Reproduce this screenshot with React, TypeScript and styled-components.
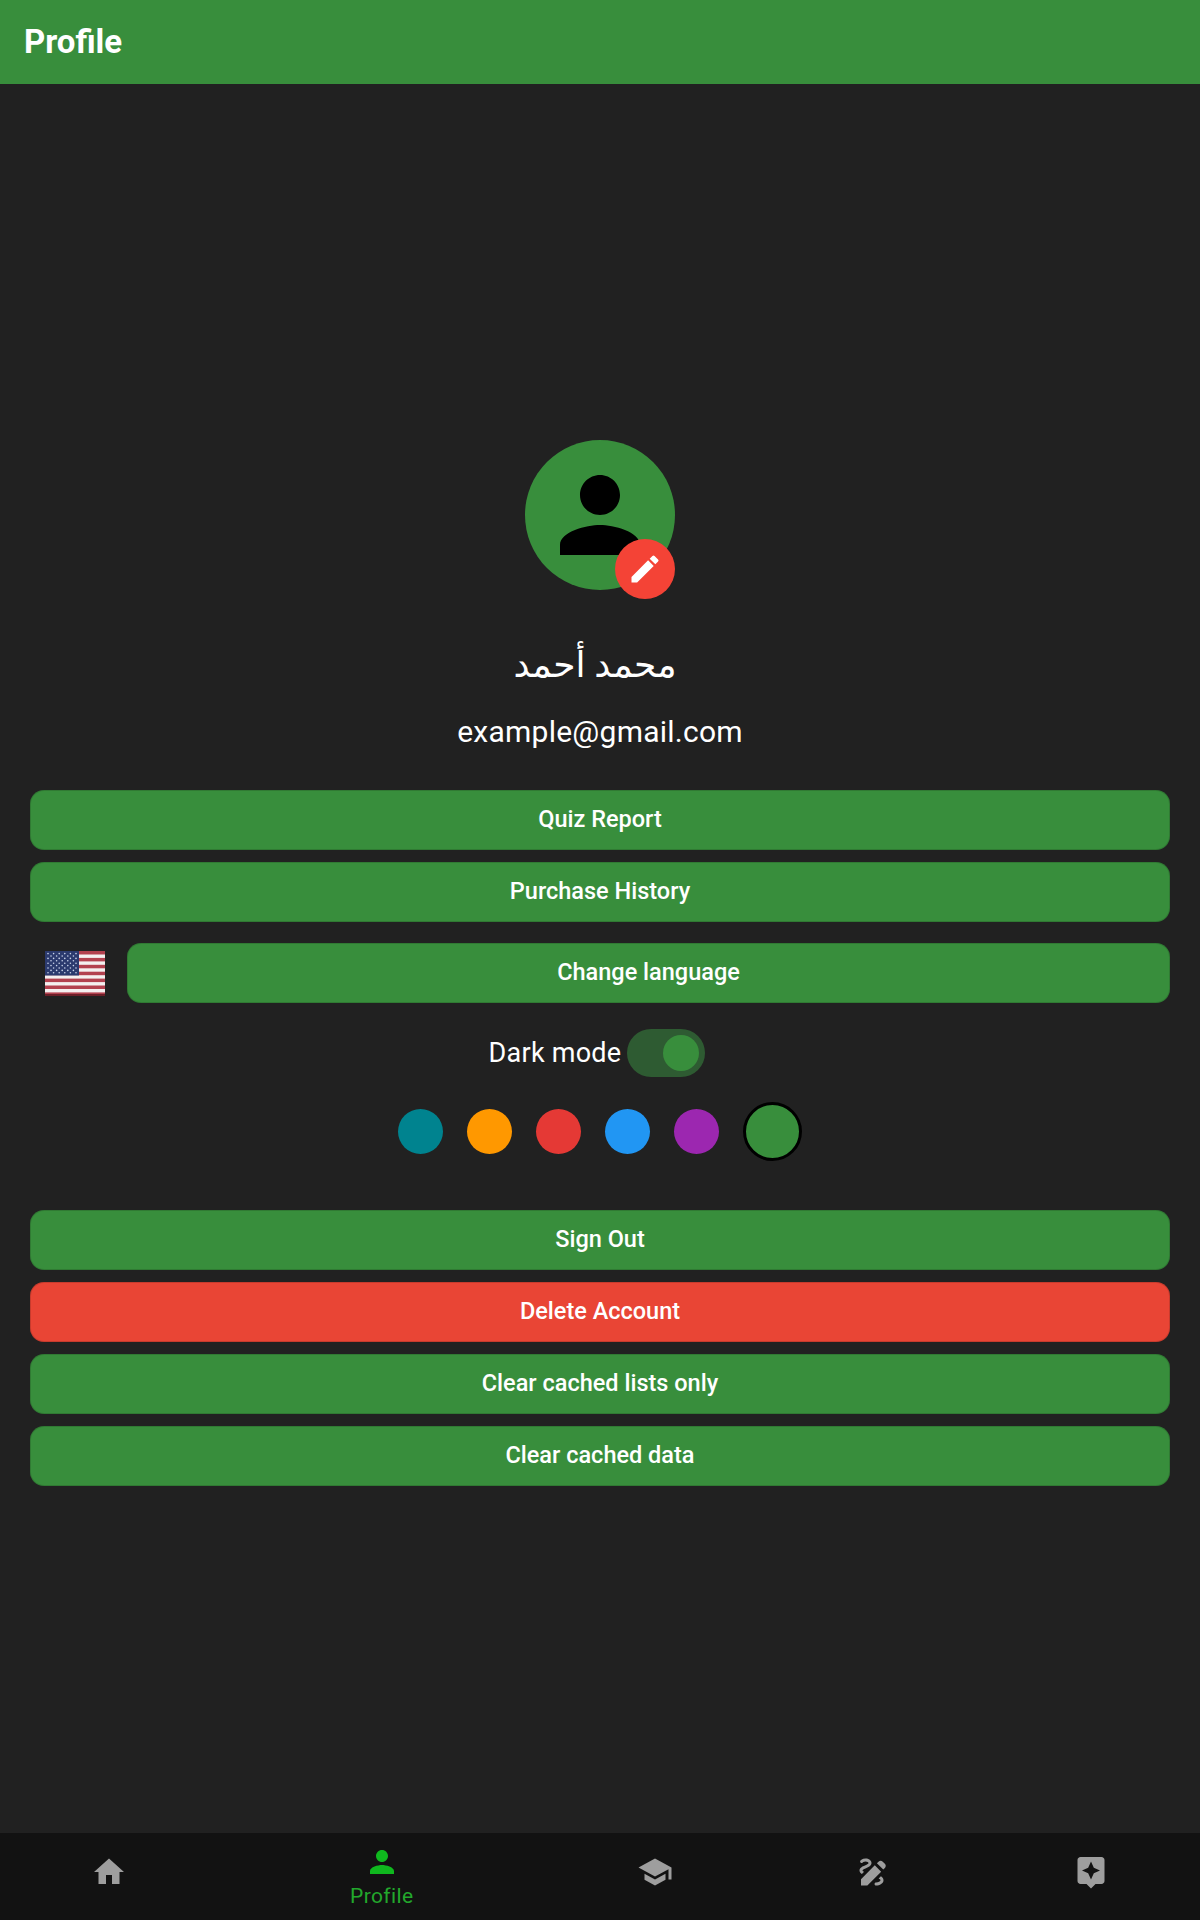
import { createGlobalStyle, styled } from 'styled-components';
import { MdAssistant, MdDraw, MdEdit, MdHome, MdPerson, MdSchool } from 'react-icons/md';

const GlobalStyle = createGlobalStyle`
  html, body {
    margin: 0;
    padding: 0;
    background: #212121;
  }
  * {
    box-sizing: border-box;
  }
`;

const Page = styled.div`
  display: flex;
  flex-direction: column;
  width: 1200px;
  height: 1920px;
  background: #212121;
  color: #fff;
  font-family: Roboto, "DejaVu Sans", sans-serif;
`;

const Header = styled.header`
  display: flex;
  align-items: center;
  height: 84px;
  padding: 0 24px 1px;
  background: #388e3c;
`;

const Title = styled.h1`
  margin: 0;
  font-size: 33px;
  font-weight: 700;
`;

const Main = styled.main`
  flex: 1;
  display: flex;
  flex-direction: column;
  padding: 356px 30px 0;
`;

const AvatarWrap = styled.div`
  position: relative;
  align-self: center;
  width: 150px;
  height: 150px;
`;

const Avatar = styled.div`
  display: flex;
  align-items: center;
  justify-content: center;
  width: 150px;
  height: 150px;
  border-radius: 50%;
  background: #388e3c;
  color: #000;
`;

const EditBadge = styled.div`
  position: absolute;
  right: 0;
  bottom: -9px;
  display: flex;
  align-items: center;
  justify-content: center;
  width: 60px;
  height: 60px;
  border-radius: 50%;
  background: #f44336;
  color: #fff;
`;

const Name = styled.div`
  margin-top: 50px;
  height: 50px;
  padding-right: 10px;
  line-height: 50px;
  text-align: center;
  font-size: 36px;
`;

const Email = styled.div`
  margin-top: 25px;
  height: 34px;
  line-height: 34px;
  text-align: center;
  font-size: 30px;
  letter-spacing: 0.25px;
`;

const ButtonStack = styled.div<{ $top: number }>`
  display: flex;
  flex-direction: column;
  gap: 12px;
  margin-top: ${(p) => p.$top}px;
`;

const ActionButton = styled.button<{ $danger?: boolean }>`
  flex: 1 1 auto;
  width: 100%;
  height: 60px;
  padding: 0 0 2px;
  border: 0;
  border-radius: 14px;
  background: ${(p) => (p.$danger ? '#e94535' : '#388e3c')};
  box-shadow: inset 0 0 0 1px rgba(0, 0, 0, 0.14);
  color: #fff;
  font-family: inherit;
  font-size: 23.5px;
  font-weight: 500;
`;

const LanguageRow = styled.div`
  display: flex;
  align-items: center;
  gap: 22px;
  margin-top: 21px;
  padding-left: 15px;
`;

const FlagSvg = styled.svg`
  flex: 0 0 60px;
`;

const ModeRow = styled.div`
  display: flex;
  align-items: center;
  justify-content: center;
  gap: 6px;
  margin-top: 26px;
  padding-right: 6px;
  font-size: 27px;
  letter-spacing: 0.25px;
`;

const Track = styled.div`
  display: flex;
  align-items: center;
  justify-content: flex-end;
  width: 78px;
  height: 48px;
  padding-right: 6px;
  border-radius: 24px;
  background: #2e5b32;
`;

const Thumb = styled.div`
  width: 36px;
  height: 36px;
  border-radius: 50%;
  background: #388e3c;
`;

const Swatches = styled.div`
  display: flex;
  align-items: center;
  justify-content: center;
  gap: 24px;
  margin-top: 25px;
`;

const Swatch = styled.div<{ $color: string; $selected?: boolean }>`
  width: ${(p) => (p.$selected ? 59 : 45)}px;
  height: ${(p) => (p.$selected ? 59 : 45)}px;
  border-radius: 50%;
  background: ${(p) => p.$color};
  border: ${(p) => (p.$selected ? '3px solid #000' : '0')};
`;

const BottomNav = styled.nav`
  display: grid;
  grid-template-columns: 1fr 1.5fr 1fr 1fr 1fr;
  height: 87px;
  background: #121212;
`;

const NavItem = styled.div<{ $active?: boolean }>`
  display: flex;
  flex-direction: column;
  align-items: center;
  justify-content: ${(p) => (p.$active ? 'flex-start' : 'center')};
  padding-top: ${(p) => (p.$active ? 11 : 0)}px;
  padding-bottom: ${(p) => (p.$active ? 0 : 10)}px;
  color: ${(p) => (p.$active ? '#0fb81e' : '#9e9e9e')};
`;

const NavLabel = styled.span`
  margin-top: 2px;
  font-size: 21px;
  line-height: 28px;
  letter-spacing: 0.4px;
  color: #22a82c;
`;

const UsFlag = () => {
  const stars = [];
  for (let r = 0; r < 9; r++) {
    const count = r % 2 === 0 ? 6 : 5;
    for (let c = 0; c < count; c++) {
      stars.push(
        <circle
          key={`${r}-${c}`}
          cx={(r % 2 === 0 ? 3 : 6) + c * 5.6}
          cy={2.6 + r * 2.4}
          r={0.8}
          fill="#c9d3ea"
        />,
      );
    }
  }
  return (
    <FlagSvg width="60" height="45" viewBox="0 0 60 45">
      <rect width="60" height="45" fill="#b3414f" />
      {[0, 1, 2, 3, 4, 5].map((i) => (
        <rect key={i} y={3.5 + i * 6.9} width="60" height="3.4" fill="#f4f0f0" />
      ))}
      <rect y="43" width="60" height="2" fill="#6b1f28" />
      <rect width="34" height="24.5" fill="#2b3a6e" />
      {stars}
    </FlagSvg>
  );
};

const swatches = ['#00838f', '#ff9800', '#e53935', '#2196f3', '#9c27b0'];

export default function App() {
  return (
    <Page>
      <GlobalStyle />
      <Header>
        <Title>Profile</Title>
      </Header>
      <Main>
        <AvatarWrap>
          <Avatar>
            <MdPerson size={120} />
          </Avatar>
          <EditBadge>
            <MdEdit size={36} />
          </EditBadge>
        </AvatarWrap>
        <Name dir="rtl">محمد أحمد</Name>
        <Email>example@gmail.com</Email>
        <ButtonStack $top={41}>
          <ActionButton>Quiz Report</ActionButton>
          <ActionButton>Purchase History</ActionButton>
        </ButtonStack>
        <LanguageRow>
          <UsFlag />
          <ActionButton>Change language</ActionButton>
        </LanguageRow>
        <ModeRow>
          Dark mode
          <Track>
            <Thumb />
          </Track>
        </ModeRow>
        <Swatches>
          {swatches.map((color) => (
            <Swatch key={color} $color={color} />
          ))}
          <Swatch $color="#388e3c" $selected />
        </Swatches>
        <ButtonStack $top={49}>
          <ActionButton>Sign Out</ActionButton>
          <ActionButton $danger>Delete Account</ActionButton>
          <ActionButton>Clear cached lists only</ActionButton>
          <ActionButton>Clear cached data</ActionButton>
        </ButtonStack>
      </Main>
      <BottomNav>
        <NavItem>
          <MdHome size={36} />
        </NavItem>
        <NavItem $active>
          <MdPerson size={36} />
          <NavLabel>Profile</NavLabel>
        </NavItem>
        <NavItem>
          <MdSchool size={36} />
        </NavItem>
        <NavItem>
          <MdDraw size={36} />
        </NavItem>
        <NavItem>
          <MdAssistant size={36} />
        </NavItem>
      </BottomNav>
    </Page>
  );
}
